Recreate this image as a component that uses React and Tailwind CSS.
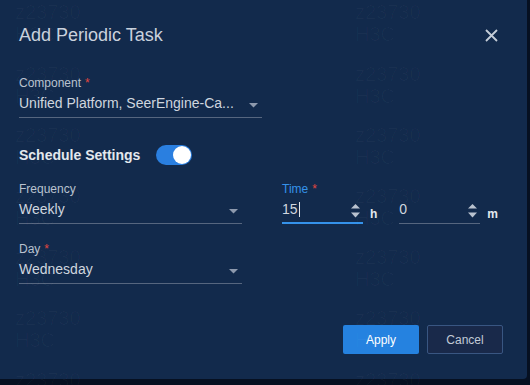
import React from 'react';

const Caret = ({ className }) => (
  <svg width="9" height="5" viewBox="0 0 9 5" className={className}>
    <path d="M0 0 L9 0 L4.5 4.5 Z" fill="#8d99ad" />
  </svg>
);

const Spinner = ({ className }) => (
  <svg width="9" height="14" viewBox="0 0 9 14" className={className}>
    <path d="M0 4.5 L4.5 0 L9 4.5 Z" fill="#b9c2cf" />
    <path d="M0 8.5 L9 8.5 L4.5 13.5 Z" fill="#b9c2cf" />
  </svg>
);

const Label = ({ children, required, active }) => (
  <div className={`h-4 text-[12px] leading-4 ${active ? 'text-[#3592ea]' : 'text-[#b9c2cf]'}`}>
    {children}
    {required && <span className="ml-1 text-[#e2463e]">*</span>}
  </div>
);

const SelectField = ({ label, required, value, className }) => (
  <div className={className}>
    <Label required={required}>{label}</Label>
    <div className="mt-[2px] h-[25px] border-b border-[#56667f] flex items-start justify-between">
      <span className="text-[14px] leading-5 text-[#cfd6df]">{value}</span>
      <Caret className="mt-[9.5px] mr-1" />
    </div>
  </div>
);

// faint user watermark tiled over the page
const Watermarks = () => {
  const marks = [];
  [15, 355].forEach((left) => {
    for (let i = 0; i < 7; i++) {
      marks.push({ left, top: 1.4 + 61.2 * i });
    }
  });
  return (
    <div className="absolute inset-0 pointer-events-none">
      {marks.map((m, i) => (
        <div
          key={i}
          className="absolute text-[20px] leading-[22px] text-white/[0.028]"
          style={{ left: m.left, top: m.top }}
        >
          <div>z23730</div>
          <div>H3C</div>
        </div>
      ))}
    </div>
  );
};

export default function App() {
  return (
    <div className="relative w-[530px] h-[385px] overflow-hidden bg-[#061021] font-['Liberation_Sans',Arial,sans-serif]">
      <div className="w-[527px] h-[379px] rounded-br-[4px] bg-[#122a4c] flex flex-col pl-[19px]">
        {/* header */}
        <div className="flex items-start justify-between pt-[26px] pr-[29px]">
          <h2 className="text-[18px] leading-[18px] text-[#c9d1dc]">Add Periodic Task</h2>
          <button className="mt-[3px]">
            <svg width="13" height="13" viewBox="0 0 13 13">
              <path d="M1 1 L12 12 M12 1 L1 12" stroke="#c5cdd8" strokeWidth="1.8" />
            </svg>
          </button>
        </div>

        <SelectField
          className="mt-[31px] w-[243px]"
          label="Component"
          required
          value="Unified Platform, SeerEngine-Ca..."
        />

        {/* schedule toggle */}
        <div className="mt-[27px] h-5 flex items-center gap-4">
          <span className="text-[14px] leading-5 font-bold text-[#e3e8ee]">Schedule Settings</span>
          <div className="w-9 h-5 rounded-full bg-[#2a7fe0] flex items-center justify-end pr-[1px]">
            <div className="w-[18px] h-[18px] rounded-full bg-white" />
          </div>
        </div>

        <div className="mt-4 flex items-start">
          <SelectField className="w-[223px]" label="Frequency" value="Weekly" />

          <div className="ml-10">
            <Label required active>Time</Label>
            <div className="mt-[2px] flex items-start">
              <div className="w-[81px] h-[25px] border-b-2 border-[#3592ea] flex items-start justify-between">
                <span className="text-[14px] leading-5 text-[#cfd6df] flex items-center">
                  15<span className="ml-px w-px h-[15px] bg-[#dfe4ea]" />
                </span>
                <Spinner className="mt-[4.5px] mr-[3px]" />
              </div>
              <span className="ml-[7px] mt-[7px] text-[12px] leading-4 font-bold text-[#e3e8ee]">h</span>
              <div className="ml-[22px] w-[81px] h-[25px] border-b border-[#56667f] flex items-start justify-between">
                <span className="text-[14px] leading-5 text-[#cfd6df]">0</span>
                <Spinner className="mt-[4.5px] mr-[3px]" />
              </div>
              <span className="ml-[7px] mt-[7px] text-[12px] leading-4 font-bold text-[#e3e8ee]">m</span>
            </div>
          </div>
        </div>

        <SelectField className="mt-[17px] w-[223px]" label="Day" required value="Wednesday" />

        {/* footer */}
        <div className="mt-auto flex justify-end gap-2 pr-6 pb-[25px]">
          <button className="w-[76px] h-[29px] rounded-[2px] bg-[#2582e0] text-[12px] text-white">
            Apply
          </button>
          <button className="w-[76px] h-[29px] rounded-[2px] border border-[#395682] bg-[#19294a] text-[12px] text-[#c2cad6]">
            Cancel
          </button>
        </div>
      </div>
      <Watermarks />
    </div>
  );
}
